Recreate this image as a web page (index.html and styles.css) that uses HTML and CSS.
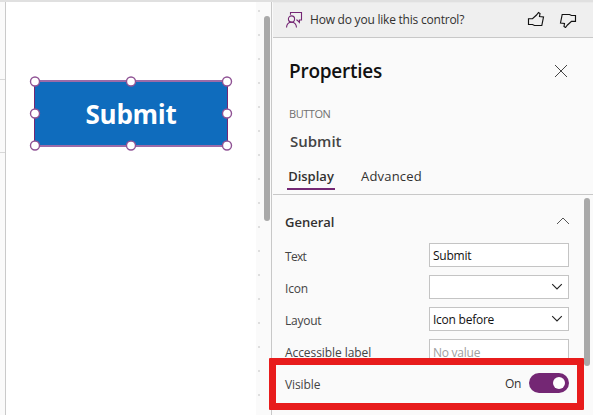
FILE: index.html
```html
<!DOCTYPE html>
<html lang="en">
<head>
<meta charset="utf-8">
<title>Properties</title>
<link rel="stylesheet" href="styles.css">
</head>
<body>
<div class="app">
  <main class="workspace">
    <div class="ruler"><i></i><i></i></div>
    <div class="canvas">
      <div class="selection">
        <span class="w-button">Submit</span>
        <svg class="handles" width="204" height="77" viewBox="0 0 204 77">
          <g fill="#fff" stroke="#8f5294" stroke-width="1.4">
            <circle cx="6" cy="6.500" r="4.500"/><circle cx="102" cy="6.500" r="4.500"/><circle cx="198" cy="6.500" r="4.500"/>
            <circle cx="6" cy="38.500" r="4.500"/><circle cx="198" cy="38.500" r="4.500"/>
            <circle cx="6" cy="70.500" r="4.500"/><circle cx="102" cy="70.500" r="4.500"/><circle cx="198" cy="70.500" r="4.500"/>
          </g>
        </svg>
      </div>
    </div>
    <div class="gutter"><div class="thumb"></div></div>
  </main>
  <aside class="panel">
    <div class="feedback">
      <svg class="person" width="18" height="18" viewBox="0 0 18 18" fill="none" stroke="#742774" stroke-width="1.1"><path d="M5.500 3.800V1.500h11v7.500h-2.100v2.400l-2.300-2.400h-1"/><circle cx="6.500" cy="8" r="3.100"/><path d="M1.500 16.500c.2-3.200 2.100-5.300 5-5.300s4.800 2.100 5 5.300"/></svg>
      <span class="question">How do you like this control?</span>
      <svg class="thumb-up" width="18" height="16" viewBox="0 0 18 16" fill="none" stroke="#111" stroke-width="1.15"><path d="M1.500 7.700H5.500L9.500 4 11.500 1.500 13 2.500 12.500 5.500 16.500 6 14.800 14.500H7.500L5.500 13.500h-4z"/></svg>
      <svg class="thumb-down" width="18" height="16" viewBox="0 0 18 16" fill="none" stroke="#111" stroke-width="1.15"><path d="M16.500 9.300h-4L8.500 13 6.500 15.500 5 14.500l.5-3L1.500 11 3.200 2.500h7.300l2 1h4z"/></svg>
    </div>
    <header class="head">
      <div class="title-row"><h1>Properties</h1>
        <svg width="14" height="14" viewBox="0 0 14 14" fill="none" stroke="#444" stroke-width="1"><path d="M1 1l12 12M13 1L1 13"/></svg>
      </div>
      <div class="kind">BUTTON</div>
      <div class="name">Submit</div>
      <nav><span class="tab active">Display</span><span class="tab adv">Advanced</span></nav>
    </header>
    <section class="body">
      <div class="group"><h2>General</h2><svg width="14" height="8" viewBox="0 0 14 8" fill="none" stroke="#555" stroke-width="1"><path d="M1 7l6-6 6 6"/></svg></div>
      <div class="row"><label class="l-text">Text</label><div class="field"><span class="v-submit">Submit</span></div></div>
      <div class="row"><label class="l-icon">Icon</label><div class="field"><span></span><svg width="12" height="8" viewBox="0 0 12 8" fill="none" stroke="#222" stroke-width="1.1"><path d="M1.200 1.200L6 6l4.800-4.800"/></svg></div></div>
      <div class="row"><label class="l-layout">Layout</label><div class="field"><span class="v-before">Icon before</span><svg width="12" height="8" viewBox="0 0 12 8" fill="none" stroke="#222" stroke-width="1.1"><path d="M1.200 1.200L6 6l4.800-4.800"/></svg></div></div>
      <div class="row"><label class="l-acc">Accessible label</label><div class="field"><span class="v-none">No value</span></div></div>
      <div class="row visible"><label class="l-visible">Visible</label><div class="switch"><span class="on">On</span><div class="toggle"><i></i></div></div></div>
      <div class="thumb panel-thumb"></div>
    </section>
  </aside>
  <div class="callout"></div>
</div>
</body>
</html>
```
FILE: styles.css
```css
* { box-sizing: border-box; }
body { margin: 0; overflow: hidden; font-family: "Open Sans", "Noto Sans", sans-serif; color: #323130; }
svg { display: block; flex: none; }
span, label, h1, h2 { white-space: nowrap; }
h1, h2 { margin: 0; }
.app { position: relative; width: 593px; height: 415px; display: flex; border-top: 2px solid #e0e0e0; background: #fafafa; }
.workspace { width: 272px; display: flex; border-right: 1px solid #c8c8c8; }
.ruler { width: 6px; border-right: 1px solid #cacaca; padding-top: 77px; display: flex; flex-direction: column; gap: 72px; }
.ruler i { height: 1px; background: #d8d8d8; }
.canvas { width: 250px; background: #fff; padding: 78px 0 0 28px; }
.selection { position: relative; width: 194px; height: 67px; background: #0f6cbd; border: 1px solid #742774; border-top: 2px solid #9b6ba8; border-bottom: 2px solid #9b6ba8; border-radius: 2px; display: flex; align-items: center; justify-content: center; }
.w-button { color: #fff; font-weight: 700; font-size: 26px; line-height: 36px; letter-spacing: -.3px; }
.handles { position: absolute; left: -6px; top: -7px; }
.gutter { width: 15px; padding: 14px 0 0 8px; background: conic-gradient(from 0deg at 2px 2px, transparent 75%, #dedede 0) 2px 8px / 24px 24px; }
.thumb { width: 6px; height: 205px; border-radius: 3px; background: #a9a9a9; }
.panel { width: 321px; padding-left: 1px; }
.feedback { height: 36px; background: #efefef; border-bottom: 1px solid #c8c8c8; border-top: 1px solid #eaeaea; display: flex; align-items: center; padding-left: 12px; }
.question { margin-left: 7px; width: 218px; font-size: 12px; line-height: 18px; letter-spacing: -.22px; color: #323130; }
.person { margin-bottom: 1px; }
.thumb-up, .thumb-down { margin-bottom: 3px; }
.thumb-up { margin-left: -1px; }
.thumb-down { margin: 0 0 1px 14px; }
.head { height: 157px; border-bottom: 1px solid #c8c8c8; padding: 18px 25px 0 14px; }
.title-row { display: flex; height: 30px; align-items: center; justify-content: space-between; padding-left: 2px; }
h1 { font-size: 19px; font-weight: 600; color: #111; line-height: 30px; letter-spacing: -.25px; }
.kind { margin: 20px 0 0 2px; font-size: 11px; line-height: 16px; letter-spacing: -.45px; color: #707070; }
.name { margin: 7px 0 0 3px; font-size: 15px; font-weight: 600; line-height: 24px; color: #444; }
nav { display: flex; margin-top: 12px; gap: 26px; }
.tab { height: 25px; line-height: 23px; font-size: 13px; }
.adv { letter-spacing: .2px; }
.active { width: 48px; text-align: center; font-weight: 600; border-bottom: 2px solid #742774; }
.body { position: relative; padding: 16px 24px 0 12px; height: 218px; }
.group { height: 24px; display: flex; align-items: center; justify-content: space-between; margin-bottom: 8px; }
h2 { font-size: 13px; font-weight: 600; line-height: 22px; margin-bottom: 2px; }
.group svg { margin: 0 -1px 4px 0; }
.row { height: 24px; margin-bottom: 8px; display: flex; justify-content: space-between; align-items: center; }
label { font-size: 12px; line-height: 24px; padding-top: 3px; color: #444; }
.l-text { letter-spacing: -.7px; }
.l-icon { letter-spacing: -.2px; }
.l-layout { letter-spacing: -.25px; }
.l-acc { letter-spacing: -.07px; }
.l-visible { letter-spacing: -.1px; }
.field { width: 140px; height: 24px; background: #fff; border: 1px solid #c4c4c4; padding: 0 5px 0 3px; display: flex; align-items: center; justify-content: space-between; font-size: 12px; color: #111; }
.field svg { margin-bottom: 1px; }
.v-submit, .v-before { letter-spacing: -.25px; padding-top: 1px; }
.v-none { color: #a0a0a0; padding-top: 2px; letter-spacing: -.25px; }
.switch { display: flex; align-items: center; gap: 8px; font-size: 12px; }
.on { letter-spacing: -.3px; }
.toggle { width: 40px; height: 20px; border-radius: 10px; background: #742774; padding: 4px; display: flex; justify-content: flex-end; }
.toggle i { width: 12px; height: 12px; border-radius: 50%; background: #fff; }
.panel-thumb { position: absolute; left: 311px; top: 3px; height: 168px; }
.callout { position: absolute; left: 269px; top: 356px; width: 315px; height: 52px; border: 7px solid #e81c1c; border-radius: 1px; }
```
